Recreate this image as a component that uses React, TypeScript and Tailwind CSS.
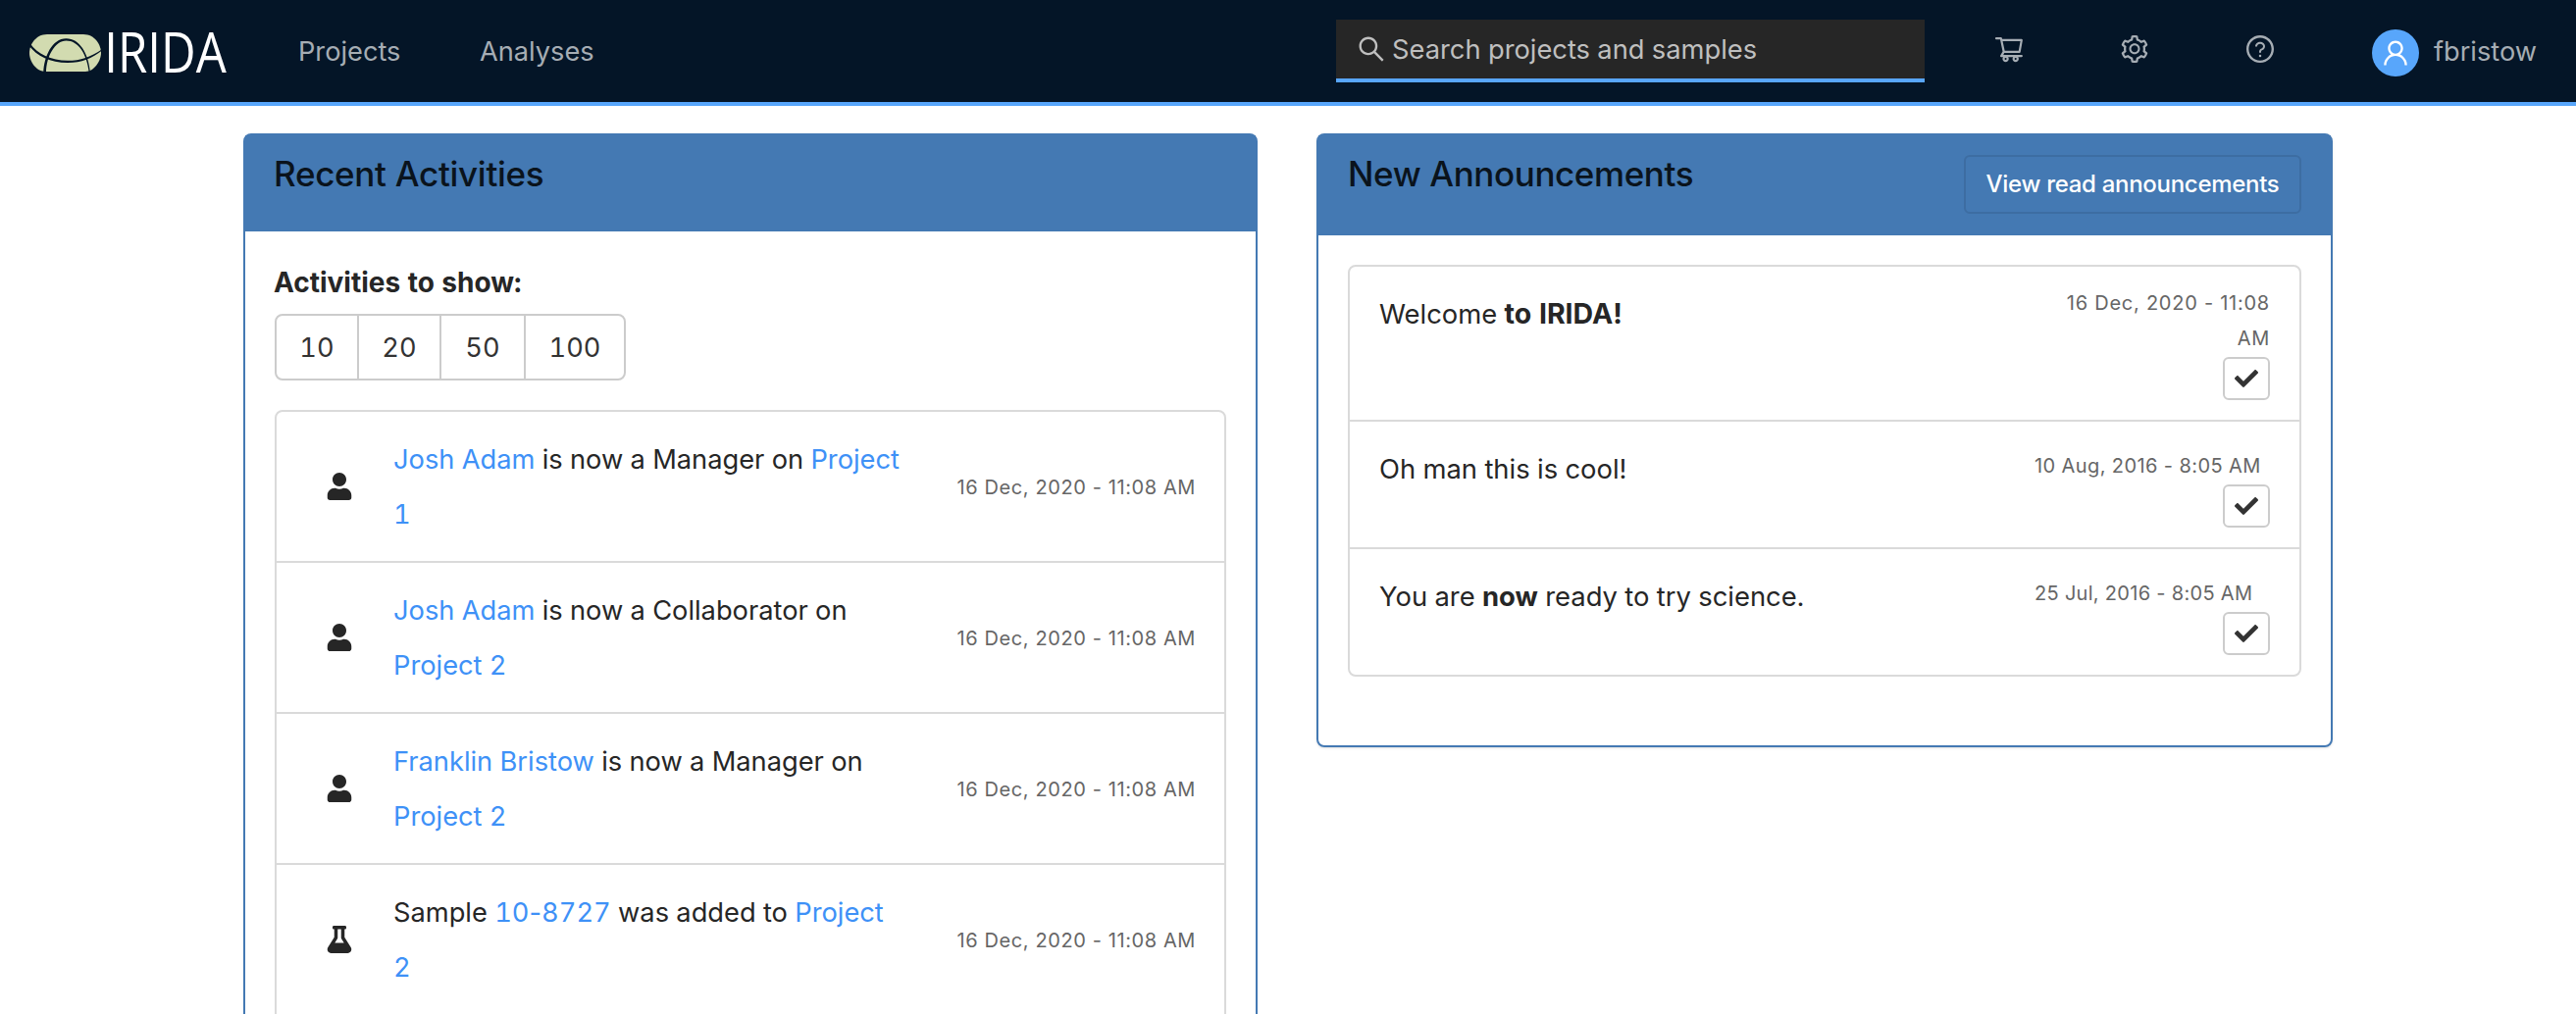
import type { ReactNode } from "react";
import {
  AiOutlineQuestionCircle,
  AiOutlineSearch,
  AiOutlineSetting,
  AiOutlineShoppingCart,
  AiOutlineUser,
} from "react-icons/ai";
import { FaCheck, FaFlask, FaUser } from "react-icons/fa";

function Logo() {
  return (
    <svg width="204" height="84" viewBox="28 10 204 84" className="block shrink-0 overflow-visible">
      <path
        d="M48 35H85C97 35 103 46 103 54C103 62 96 73 87 73H47C36 73 30 62 30 54C30 46 36 35 48 35Z"
        fill="#d2dbb0"
      />
      <path
        d="M30.5 44C38 55 52 61.6 69 61.8C82 61.8 93 58 104 50.2L104 51.4C94 59.5 83 63.8 69 64C51 63.8 38 57.5 29 46Z"
        fill="#041527"
      />
      <path
        d="M44.3 74C44.8 58 53 39.3 67.5 39.3C81 39.3 90 54 92 74L90.8 74C88.5 55 80 41.6 67.5 41.6C56 41.6 47.2 58 47 74Z"
        fill="#041527"
      />
      <text
        x="106.3"
        y="74"
        fontSize="56"
        fontFamily="'Open Sans', sans-serif"
        fill="#ffffff"
        textLength="124.5"
        lengthAdjust="spacingAndGlyphs"
      >
        IRIDA
      </text>
    </svg>
  );
}

function Navbar() {
  return (
    <header className="flex h-[108px] items-center border-b-4 border-[#58a6fb] bg-[#041527] pr-[39px] pl-7 text-[27.2px] text-[#a6adb4]">
      <Logo />
      <nav className="ml-[72px] flex translate-y-px">
        <a className="w-[185px]">Projects</a>
        <a>Analyses</a>
      </nav>
      <div className="ml-auto flex h-16 w-[600px] items-center border-b-4 border-[#58a6fb] bg-[#262626] pl-5 text-[#bfbfbf]">
        <AiOutlineSearch size={32} />
        <span className="ml-[5px] translate-y-px text-[27.3px]">Search projects and samples</span>
      </div>
      <div className="mb-1 ml-[70px] flex gap-24">
        <AiOutlineShoppingCart size={32} />
        <AiOutlineSetting size={32} />
        <AiOutlineQuestionCircle size={32} />
      </div>
      <div className="mt-1 ml-[98px] flex size-12 items-center justify-center rounded-full bg-[#58a6fb] text-white">
        <AiOutlineUser size={32} />
      </div>
      <span className="ml-[15px] w-[106px] translate-y-px">fbristow</span>
    </header>
  );
}

const PAGE_SIZES = [
  { label: "10", width: "w-[84px]" },
  { label: "20", width: "w-[84px]" },
  { label: "50", width: "w-[86px]" },
  { label: "100", width: "w-[100px]" },
];

function Link({ children }: { children: ReactNode }) {
  return <a className="text-[#3e91f7]">{children}</a>;
}

const ACTIVITIES: { id: number; icon: "user" | "flask"; body: ReactNode }[] = [
  { id: 1, icon: "user", body: <><Link>Josh Adam</Link> is now a Manager on <Link>Project<br />1</Link></> },
  { id: 2, icon: "user", body: <><Link>Josh Adam</Link> is now a Collaborator on<br /><Link>Project 2</Link></> },
  { id: 3, icon: "user", body: <><Link>Franklin Bristow</Link> is now a Manager on<br /><Link>Project 2</Link></> },
  {
    id: 4,
    icon: "flask",
    body: (
      <>
        Sample <Link>10<span className="proportional-nums">-</span>8727</Link> was added to <Link>Project<br />2</Link>
      </>
    ),
  },
];

function RecentActivities() {
  return (
    <section className="w-[1034px] rounded-lg border-2 border-[#4479b3]">
      <div className="h-[98px] bg-[#4479b3] px-[29px] pt-[19px]">
        <h2 className="text-[35px] leading-10 font-medium tracking-[-0.3px] text-[#0a131c]">Recent Activities</h2>
      </div>
      <div className="px-[30px] pt-[38px] pb-10">
        <div className="-ml-px text-[28px] leading-7 font-bold">Activities to show:</div>
        <div className="mt-[18px] flex h-[68px] w-[358px] rounded-lg border-2 border-[#cccccc] text-[#333333]">
          {PAGE_SIZES.map((size) => (
            <button
              key={size.label}
              className={`flex items-center justify-center border-r-2 border-[#cccccc] pt-0.5 text-[27.2px] last:border-r-0 ${size.width}`}
            >
              {size.label}
            </button>
          ))}
        </div>
        <ul className="mt-[30px] rounded-t-lg border-2 border-[#dadada]">
          {ACTIVITIES.map((activity) => (
            <li
              key={activity.id}
              className="flex items-center border-b-2 border-[#dadada] py-5 pr-[29px] pl-[50px] last:border-b-0"
            >
              {activity.icon === "user" ? <FaUser size={28} /> : <FaFlask size={28} />}
              <p className="ml-[41px] h-28 w-[530px] translate-y-px text-[27.25px] leading-[56px]">{activity.body}</p>
              <time className="ml-auto translate-y-px text-[20px] tracking-[0.6px] text-[#666666] proportional-nums">
                16 Dec, 2020 - 11:08 AM
              </time>
            </li>
          ))}
        </ul>
      </div>
    </section>
  );
}

const ANNOUNCEMENTS: { id: number; height: string; body: ReactNode; date: ReactNode }[] = [
  {
    id: 1,
    height: "h-[158px]",
    body: <>Welcome <b className="text-[28.5px]">to IRIDA!</b></>,
    date: <span className="block text-right tracking-[0.75px]">16 Dec, 2020 - 11:08<br />AM</span>,
  },
  { id: 2, height: "h-[130px]", body: "Oh man this is cool!", date: "10 Aug, 2016 - 8:05 AM" },
  {
    id: 3,
    height: "h-[128px]",
    body: <>You are <b>now</b> ready to try science.</>,
    date: <span className="tracking-[0.3px]">25 Jul, 2016 - 8:05 AM</span>,
  },
];

function Announcements() {
  return (
    <section className="w-[1036px] rounded-lg border-2 border-[#4479b3] shadow-sm">
      <div className="flex h-[102px] items-start justify-between bg-[#4479b3] px-[30px]">
        <h2 className="mt-[19px] text-[35px] leading-10 font-medium tracking-[-0.4px] text-[#0a131c]">
          New Announcements
        </h2>
        <button className="mt-5 h-[60px] w-[344px] rounded-md border-2 border-[#3d6da2] text-[24px] font-medium tracking-[-0.3px] text-white">
          View read announcements
        </button>
      </div>
      <div className="px-[30px] pt-[30px] pb-[70px]">
        <ul className="rounded-lg border-2 border-[#dadada]">
          {ANNOUNCEMENTS.map((item) => (
            <li
              key={item.id}
              className={`flex justify-between border-b-2 border-[#dadada] px-[30px] py-5 last:border-b-0 ${item.height}`}
            >
              <p className="text-[27.4px] leading-[56px]">{item.body}</p>
              <div className="flex w-[240px] flex-col justify-end">
                <time className="text-[20px] leading-9 tracking-[0.4px] text-[#666666] proportional-nums">{item.date}</time>
                <button className="mt-px flex h-11 w-12 shrink-0 items-center justify-center self-end rounded-md border-2 border-[#cccccc] text-[#333333]">
                  <FaCheck size={24} />
                </button>
              </div>
            </li>
          ))}
        </ul>
      </div>
    </section>
  );
}

export default function App() {
  return (
    <div className="h-[1034px] overflow-hidden bg-white font-['Inter',sans-serif] text-[#262626] tabular-nums">
      <Navbar />
      <main className="flex items-start gap-[60px] pt-7 pl-[248px]">
        <div className="h-[898px] shrink-0 overflow-hidden">
          <RecentActivities />
        </div>
        <Announcements />
      </main>
    </div>
  );
}
